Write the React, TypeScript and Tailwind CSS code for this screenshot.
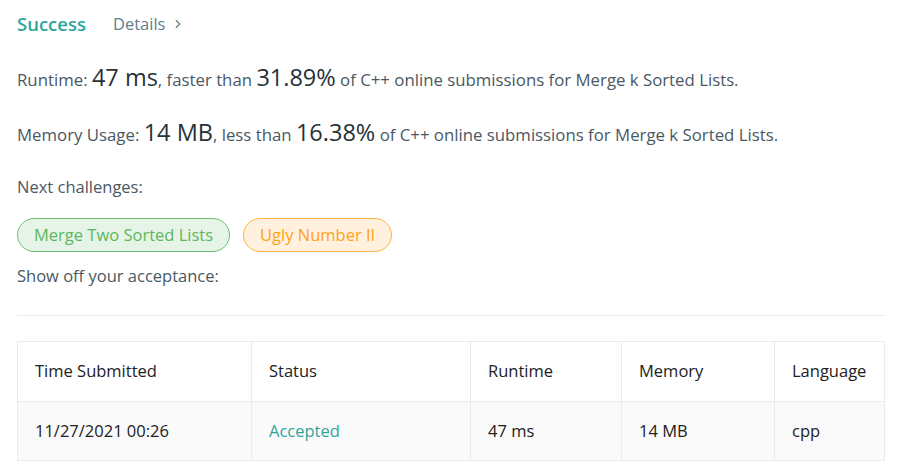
import { ChevronRight } from 'lucide-react'

const FONT = { fontFamily: '"Open Sans", "Noto Sans", sans-serif' }

const COLUMNS = [
  { key: 'time', label: 'Time Submitted', width: 'w-[234px]' },
  { key: 'status', label: 'Status', width: 'w-[219px]' },
  { key: 'runtime', label: 'Runtime', width: 'w-[151px]' },
  { key: 'memory', label: 'Memory', width: 'w-[153px]' },
  { key: 'lang', label: 'Language', width: '' },
]

function StatLine({ label, value, cmp, pct }: { label: string; value: string; cmp: string; pct: string }) {
  return (
    <p className="text-[16.8px] text-[#4a5863] leading-[28px]">
      {label}: <span className="text-[23.5px] text-[#263238]">{value}</span>, {cmp}{' '}
      <span className="text-[23.5px] text-[#263238]">{pct}</span> of C++ online submissions for Merge k Sorted Lists.
    </p>
  )
}

export default function App() {
  return (
    <div className="bg-white w-[902px] h-[474px] px-[17px] pt-[10px]" style={FONT}>
      {/* Header */}
      <div className="flex items-center h-[28px]">
        <span className="text-[18.5px] font-semibold text-[#2ea59a]">Success</span>
        <span className="ml-[27px] flex items-center text-[16.5px] text-[#5f7f8c]">
          Details
          <ChevronRight className="w-[14px] h-[14px] ml-[6px]" strokeWidth={2} />
        </span>
      </div>

      <div className="mt-[25px]">
        <StatLine label="Runtime" value="47 ms" cmp="faster than" pct="31.89%" />
      </div>
      <div className="mt-[24px]">
        <StatLine label="Memory Usage" value="14 MB" cmp="less than" pct="16.38%" />
      </div>

      <p className="mt-[26px] text-[16.5px] text-[#4a5863] leading-[24px]">Next challenges:</p>

      <div className="mt-[19px] flex gap-[13px]">
        <span className="h-[34px] px-[16px] flex items-center rounded-full border border-[#6cbf6f] bg-[#e6f4e7] text-[#5cb85c] text-[16.5px]">
          Merge Two Sorted Lists
        </span>
        <span className="h-[34px] px-[16px] flex items-center rounded-full border border-[#ffb440] bg-[#fff1de] text-[#ffa116] text-[16.5px]">
          Ugly Number II
        </span>
      </div>

      <p className="mt-[12px] text-[16.5px] text-[#4a5863] leading-[24px]">Show off your acceptance:</p>

      <div className="mt-[27px] border-t border-[#ebebeb]" />

      {/* Submissions table */}
      <table className="mt-[25px] w-full border-collapse text-[16.5px] text-[#212121]">
        <thead>
          <tr>
            {COLUMNS.map(c => (
              <th key={c.key} className={`${c.width} h-[60px] border border-[#ebebeb] px-[17px] text-left font-normal`}>
                {c.label}
              </th>
            ))}
          </tr>
        </thead>
        <tbody>
          <tr className="bg-[#fafafa]">
            <td className="h-[59px] border border-[#ebebeb] px-[17px]">11/27/2021 00:26</td>
            <td className="h-[59px] border border-[#ebebeb] px-[17px] text-[#2ea59a]">Accepted</td>
            <td className="h-[59px] border border-[#ebebeb] px-[17px]">47 ms</td>
            <td className="h-[59px] border border-[#ebebeb] px-[17px]">14 MB</td>
            <td className="h-[59px] border border-[#ebebeb] px-[17px]">cpp</td>
          </tr>
        </tbody>
      </table>
    </div>
  )
}
